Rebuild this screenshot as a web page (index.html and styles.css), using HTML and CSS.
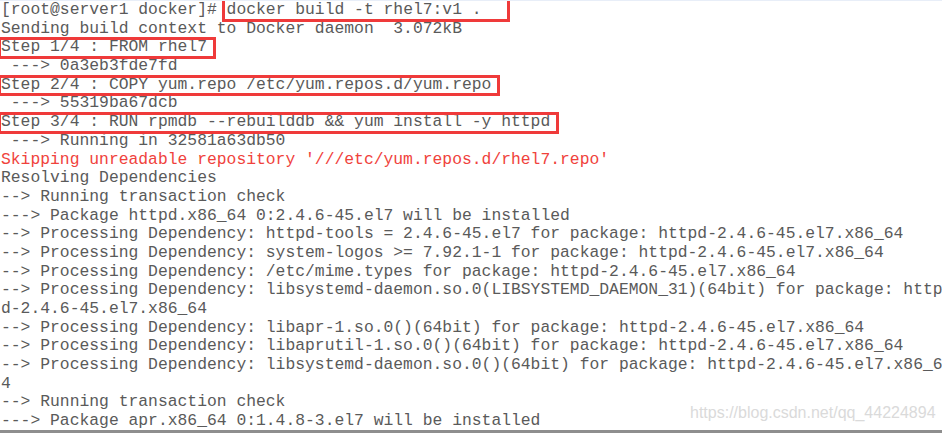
FILE: index.html
```html
<!DOCTYPE html>
<html lang="en">
<head>
<meta charset="utf-8">
<title>docker build</title>
<link rel="stylesheet" href="styles.css">
</head>
<body>
<div class="screen">
  <div class="term">
    <div class="ln">[root@server1 docker]# <span class="hl">docker build -t rhel7:v1 .  </span></div>
    <div class="ln">Sending build context to Docker daemon  3.072kB</div>
    <div class="ln"><span class="hl">Step 1/4 : FROM rhel7</span></div>
    <div class="ln"> ---&gt; 0a3eb3fde7fd</div>
    <div class="ln"><span class="hl">Step 2/4 : COPY yum.repo /etc/yum.repos.d/yum.repo</span></div>
    <div class="ln"> ---&gt; 55319ba67dcb</div>
    <div class="ln"><span class="hl">Step 3/4 : RUN rpmdb --rebuilddb &amp;&amp; yum install -y httpd</span></div>
    <div class="ln"> ---&gt; Running in 32581a63db50</div>
    <div class="ln err">Skipping unreadable repository '///etc/yum.repos.d/rhel7.repo'</div>
    <div class="ln">Resolving Dependencies</div>
    <div class="ln">--&gt; Running transaction check</div>
    <div class="ln">---&gt; Package httpd.x86_64 0:2.4.6-45.el7 will be installed</div>
    <div class="ln">--&gt; Processing Dependency: httpd-tools = 2.4.6-45.el7 for package: httpd-2.4.6-45.el7.x86_64</div>
    <div class="ln">--&gt; Processing Dependency: system-logos &gt;= 7.92.1-1 for package: httpd-2.4.6-45.el7.x86_64</div>
    <div class="ln">--&gt; Processing Dependency: /etc/mime.types for package: httpd-2.4.6-45.el7.x86_64</div>
    <div class="ln">--&gt; Processing Dependency: libsystemd-daemon.so.0(LIBSYSTEMD_DAEMON_31)(64bit) for package: http</div>
    <div class="ln">d-2.4.6-45.el7.x86_64</div>
    <div class="ln">--&gt; Processing Dependency: libapr-1.so.0()(64bit) for package: httpd-2.4.6-45.el7.x86_64</div>
    <div class="ln">--&gt; Processing Dependency: libaprutil-1.so.0()(64bit) for package: httpd-2.4.6-45.el7.x86_64</div>
    <div class="ln">--&gt; Processing Dependency: libsystemd-daemon.so.0()(64bit) for package: httpd-2.4.6-45.el7.x86_6</div>
    <div class="ln">4</div>
    <div class="ln">--&gt; Running transaction check</div>
    <div class="ln">---&gt; Package apr.x86_64 0:1.4.8-3.el7 will be installed</div>
  </div>
  <div class="watermark">https://blog.csdn.net/qq_44224894</div>
</div>
<div class="bottom-bar"></div>
</body>
</html>
```
FILE: styles.css
```css
html, body {
  margin: 0;
  padding: 0;
  background: #ffffff;
}
.screen {
  position: relative;
  height: 430px;
  overflow: hidden;
  border-top: 1px solid #e8eef8;
  box-sizing: border-box;
}
.term {
  padding: 0 0 0 1px;
  font-family: "Liberation Mono", "Courier New", monospace;
  font-size: 16.35px;
  line-height: 18.7px;
  color: #5a5a5a;
}
.ln {
  height: 18.7px;
  white-space: pre;
}
.err {
  color: #f0423c;
}
.hl {
  position: relative;
}
.hl::after {
  content: "";
  position: absolute;
  left: -3px;
  right: -9px;
  top: 0;
  bottom: -2.5px;
  border: 3px solid #ef3a3a;
  box-sizing: border-box;
}
.ln:first-child .hl::after {
  left: -5px;
  top: -2px;
}
.watermark {
  position: absolute;
  left: 690px;
  top: 403px;
  font-family: "Liberation Sans", Arial, sans-serif;
  font-size: 16px;
  color: #dadada;
}
.bottom-bar {
  height: 3px;
  background: #8e8e8e;
}
```
